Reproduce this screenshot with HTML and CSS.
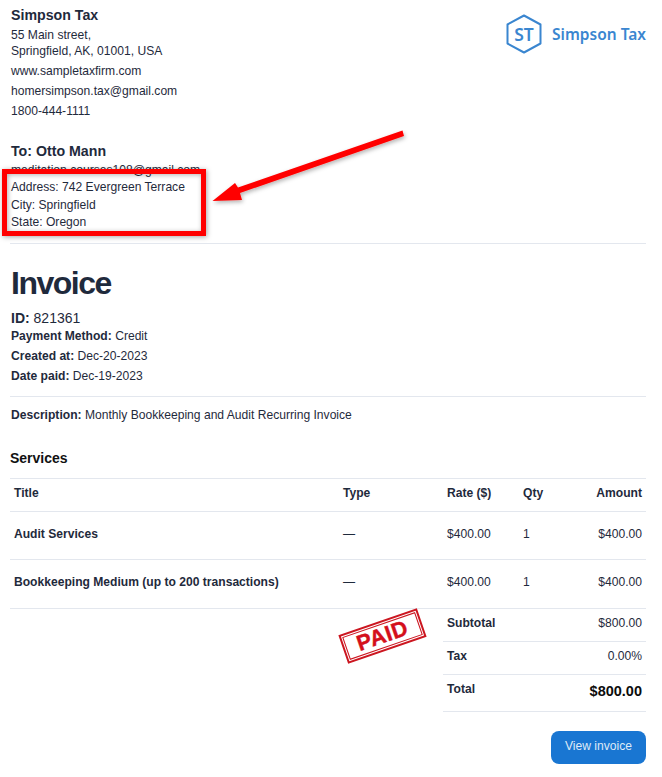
FILE: index.html
```html
<!DOCTYPE html>
<html lang="en">
<head>
<meta charset="utf-8">
<title>Invoice</title>
<link rel="stylesheet" href="styles.css">
</head>
<body>
<main class="page">
  <header class="top">
    <div class="firm">
      <h2 class="firm-name">Simpson Tax</h2>
      <p class="addr">55 Main street,<br>Springfield, AK, 01001, USA</p>
      <p class="line">www.sampletaxfirm.com</p>
      <p class="line">homersimpson.tax@gmail.com</p>
      <p class="line">1800-444-1111</p>
    </div>
    <div class="logo">
      <svg class="hex" width="36" height="40" viewBox="0 0 36 40" aria-hidden="true">
        <path d="M18 1.5 34.5 10.5V29.5L18 38.5 1.5 29.5V10.5Z" fill="none" stroke="#3a86d0" stroke-width="2" stroke-linejoin="round"/>
      </svg>
      <span class="hex-text">ST</span>
      <span class="logo-text">Simpson Tax</span>
    </div>
  </header>

  <section class="client">
    <h3 class="client-name">To: Otto Mann</h3>
    <p class="client-mail">meditation.courses108@gmail.com</p>
    <p class="client-line">Address: 742 Evergreen Terrace</p>
    <p class="client-line">City: Springfield</p>
    <p class="client-line">State: Oregon</p>
  </section>

  <hr class="rule rule-a">

  <section class="head">
    <h1 class="title">Invoice</h1>
    <p class="id"><b>ID:</b> 821361</p>
    <p class="meta"><b>Payment Method:</b> Credit</p>
    <p class="meta"><b>Created at:</b> Dec-20-2023</p>
    <p class="meta"><b>Date paid:</b> Dec-19-2023</p>
  </section>

  <hr class="rule rule-b">

  <p class="desc"><b>Description:</b> Monthly Bookkeeping and Audit Recurring Invoice</p>

  <h4 class="services">Services</h4>

  <table class="items">
    <colgroup>
      <col class="c-title"><col class="c-type"><col class="c-rate"><col class="c-qty"><col class="c-amt">
    </colgroup>
    <thead>
      <tr><th>Title</th><th>Type</th><th>Rate ($)</th><th>Qty</th><th class="num">Amount</th></tr>
    </thead>
    <tbody>
      <tr class="r1"><td><b>Audit Services</b></td><td>—</td><td>$400.00</td><td>1</td><td class="num">$400.00</td></tr>
      <tr class="r2"><td><b>Bookkeeping Medium (up to 200 transactions)</b></td><td>—</td><td>$400.00</td><td>1</td><td class="num">$400.00</td></tr>
    </tbody>
  </table>

  <div class="summary">
    <div class="sum-row"><b>Subtotal</b><span>$800.00</span></div>
    <div class="sum-row"><b>Tax</b><span>0.00%</span></div>
    <div class="sum-row sum-total"><b>Total</b><strong>$800.00</strong></div>
  </div>

  <div class="actions"><a class="btn" href="#">View invoice</a></div>

  <div class="stamp"><div class="stamp-inner">PAID</div></div>
  <div class="callout"></div>
  <svg class="arrow" width="210" height="90" viewBox="0 0 210 90" aria-hidden="true">
    <defs>
      <filter id="sh" x="-10%" y="-20%" width="120%" height="150%">
        <feDropShadow dx="1" dy="2" stdDeviation="2" flood-color="#000" flood-opacity=".3"/>
      </filter>
    </defs>
    <path d="M0.5 71 23 53 26 57.5 190.5 0.5 192 6 28 63 30 70Z" fill="#f00" filter="url(#sh)"/>
  </svg>
</main>
</body>
</html>
```
FILE: styles.css
```css
* { box-sizing: border-box; }
html, body { margin: 0; padding: 0; background: #fff; }
body {
  font-family: "Liberation Sans", Arial, sans-serif;
  font-size: 12.1px;
  color: #1f2a3c;
}
p, h1, h2, h3, h4 { margin: 0; }
.page { position: relative; width: 662px; height: 777px; padding: 0 16px 0 10px; overflow: hidden; }

.top { display: flex; justify-content: space-between; align-items: flex-start; }
.firm { padding: 7px 0 0 1px; }
.firm-name { font-size: 14.2px; line-height: 17px; font-weight: 700; }
.addr { margin-top: 3px; line-height: 16px; }
.line { margin-top: 4px; line-height: 16px; }

.logo { position: relative; display: flex; align-items: center; gap: 10px; margin-top: 14px; }
.hex { display: block; }
.hex-text { position: absolute; left: 0; top: 0; width: 36px; text-align: center; font: 600 17.5px/40px "Noto Sans", sans-serif; color: #3a86d0; }
.logo-text { font: 600 15.5px/40px "Noto Sans", sans-serif; color: #3a86d0; white-space: nowrap; }

.client { padding: 24px 0 0 1px; }
.client-name { font-size: 14.2px; line-height: 17px; font-weight: 700; }
.client-mail { margin-top: 2px; line-height: 17px; }
.client-line { line-height: 17.5px; }

.rule { border: 0; border-top: 1px solid #e3e7ee; margin: 0; }
.rule-a { margin-top: 11px; }
.head { padding-left: 1px; }
.title { font-size: 32px; line-height: 39px; letter-spacing: -1.5px; margin-top: 20px; font-weight: 700; color: #1f2a3c; }
.id { font-size: 14px; line-height: 18px; margin-top: 6px; }
.meta { line-height: 16px; margin-top: 4px; }
.id + .meta { margin-top: 1px; }
.rule-b { margin-top: 12px; }
.desc { line-height: 16px; margin: 10px 0 0 1px; }
.services { font-size: 14px; line-height: 18px; margin-top: 26px; font-weight: 700; color: #111; }

.items { width: 636px; table-layout: fixed; border-collapse: collapse; margin-top: 11px; }
.c-title { width: 329px; } .c-type { width: 104px; } .c-rate { width: 76px; } .c-qty { width: 50px; }
.items th, .items td { padding: 0 4px; text-align: left; border-top: 1px solid #e3e7ee; }
.items th { height: 33px; padding-bottom: 3px; font-weight: 700; }
.items .r1 td { height: 48px; padding-bottom: 2px; }
.items .r2 td { height: 49px; padding-bottom: 4px; }
.items .num { text-align: right; }
.items tbody tr:last-child td { border-bottom: 1px solid #e3e7ee; }

.summary { width: 203px; margin-left: auto; }
.sum-row { display: flex; justify-content: space-between; height: 33px; padding: 6px 4px 0; line-height: 16px; border-bottom: 1px solid #e3e7ee; }
.sum-total { height: 37px; }
.sum-total strong { font-size: 14.5px; line-height: 19px; margin-top: 1px; color: #0c0c0c; }

.actions { display: flex; justify-content: flex-end; margin-top: 19px; }
.btn { display: block; width: 95px; height: 33px; border-radius: 8px; background: #1976d2; color: #dfeaf7; text-align: center; line-height: 30px; text-decoration: none; }

.stamp { position: absolute; left: 341px; top: 621px; width: 83px; height: 30px; transform: rotate(-19deg); border: 2px solid #cc1620; padding: 1px; }
.stamp-inner { height: 100%; border: 1px solid #cc1620; color: #d40f1c; font-size: 22px; font-weight: 700; line-height: 22px; text-align: center; letter-spacing: .5px; -webkit-text-stroke: .4px #d40f1c; }

.callout { position: absolute; left: 2px; top: 169px; width: 204px; height: 67px; border: 5px solid #f00; box-shadow: 1px 1px 5px rgba(0,0,0,.35), inset 1px 1px 5px rgba(0,0,0,.3); }
.arrow { position: absolute; left: 212px; top: 130px; }
```
